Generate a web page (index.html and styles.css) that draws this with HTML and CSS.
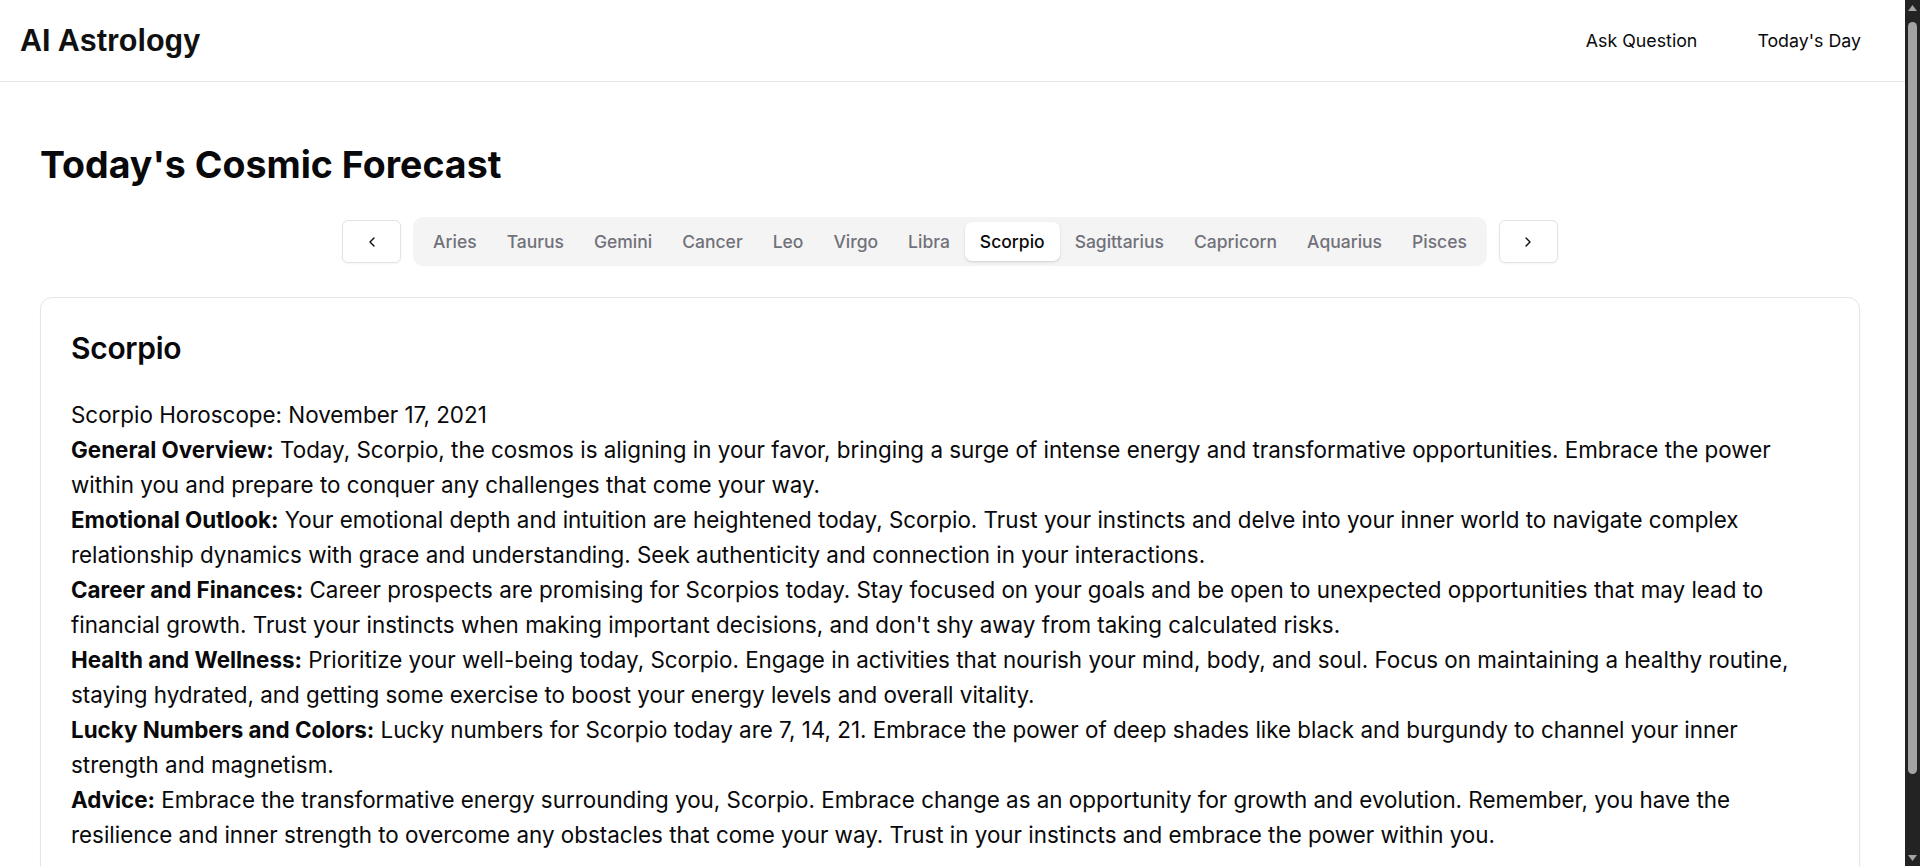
FILE: index.html
```html
<!DOCTYPE html>
<html lang="en">
<head>
<meta charset="utf-8">
<title>AI Astrology</title>
<link rel="stylesheet" href="styles.css">
</head>
<body>
<div class="app">
<header class="topbar">
  <a class="brand" href="#">AI Astrology</a>
  <nav class="nav">
    <a href="#">Ask Question</a>
    <a href="#">Today's Day</a>
  </nav>
</header>
<main class="page">
  <h1 class="page-title">Today's Cosmic Forecast</h1>
  <div class="sign-picker">
    <button class="arrow-btn" aria-label="Previous">
      <svg width="16" height="16" viewBox="0 0 24 24" fill="none" stroke="currentColor" stroke-width="2" stroke-linecap="round" stroke-linejoin="round"><path d="m15 18-6-6 6-6"/></svg>
    </button>
    <div class="tabs">
      <span class="tab">Aries</span>
      <span class="tab">Taurus</span>
      <span class="tab">Gemini</span>
      <span class="tab">Cancer</span>
      <span class="tab">Leo</span>
      <span class="tab">Virgo</span>
      <span class="tab">Libra</span>
      <span class="tab active">Scorpio</span>
      <span class="tab">Sagittarius</span>
      <span class="tab">Capricorn</span>
      <span class="tab">Aquarius</span>
      <span class="tab">Pisces</span>
    </div>
    <button class="arrow-btn" aria-label="Next">
      <svg width="16" height="16" viewBox="0 0 24 24" fill="none" stroke="currentColor" stroke-width="2" stroke-linecap="round" stroke-linejoin="round"><path d="m9 18 6-6-6-6"/></svg>
    </button>
  </div>
  <section class="card">
    <h2 class="card-title">Scorpio</h2>
    <div class="reading">
      <p>Scorpio Horoscope: November 17, 2021</p>
      <p><strong>General Overview:</strong> Today, Scorpio, the cosmos is aligning in your favor, bringing a surge of intense energy and transformative opportunities. Embrace the power within you and prepare to conquer any challenges that come your way.</p>
      <p><strong>Emotional Outlook:</strong> Your emotional depth and intuition are heightened today, Scorpio. Trust your instincts and delve into your inner world to navigate complex relationship dynamics with grace and understanding. Seek authenticity and connection in your interactions.</p>
      <p><strong>Career and Finances:</strong> Career prospects are promising for Scorpios today. Stay focused on your goals and be open to unexpected opportunities that may lead to financial growth. Trust your instincts when making important decisions, and don't shy away from taking calculated risks.</p>
      <p><strong>Health and Wellness:</strong> Prioritize your well-being today, Scorpio. Engage in activities that nourish your mind, body, and soul. Focus on maintaining a healthy routine, staying hydrated, and getting some exercise to boost your energy levels and overall vitality.</p>
      <p><strong>Lucky Numbers and Colors:</strong> Lucky numbers for Scorpio today are 7, 14, 21. Embrace the power of deep shades like black and burgundy to channel your inner strength and magnetism.</p>
      <p><strong>Advice:</strong> Embrace the transformative energy surrounding you, Scorpio. Embrace change as an opportunity for growth and evolution. Remember, you have the resilience and inner strength to overcome any obstacles that come your way. Trust in your instincts and embrace the power within you.</p>
    </div>
  </section>
</main>
</div>
<div class="scrollbar" aria-hidden="true">
  <svg class="sb-arrow" width="9" height="6" viewBox="0 0 9 6"><path d="M4.5 0 9 6H0z" fill="#a3a3a3"/></svg>
  <div class="sb-thumb"></div>
  <div class="sb-fill"></div>
  <svg class="sb-arrow" width="9" height="6" viewBox="0 0 9 6"><path d="M0 0h9L4.5 6z" fill="#a3a3a3"/></svg>
</div>
</body>
</html>
```

FILE: styles.css
```css
* { box-sizing: border-box; }

html, body {
  margin: 0;
  padding: 0;
  background: #ffffff;
  color: #09090b;
  font-family: Inter, "Noto Sans", sans-serif;
}

body {
  display: flex;
  height: 100vh;
  overflow: hidden;
}

.app {
  flex: 1;
  min-width: 0;
  height: 100vh;
  overflow-y: auto;
  background: #ffffff;
  color: #09090b;
}

.scrollbar {
  flex: none;
  width: 15px;
  height: 100vh;
  background: #232323;
  display: flex;
  flex-direction: column;
  align-items: center;
  padding: 5px 0 5px;
}

.sb-thumb {
  margin-top: 11px;
  width: 9px;
  height: 752px;
  border-radius: 5px;
  background: #a3a3a3;
}

.sb-fill { flex: 1; }

a { color: inherit; text-decoration: none; }

.topbar {
  height: 82px;
  display: flex;
  align-items: center;
  justify-content: space-between;
  padding: 0 44px 0 20px;
  border-bottom: 1px solid #e4e4e7;
}

.brand {
  font-family: "Liberation Sans", Arial, sans-serif;
  font-weight: 700;
  font-size: 30.5px;
  color: #111111;
}

.nav {
  display: flex;
  gap: 60px;
}

.nav a {
  font-size: 17.8px;
  font-weight: 400;
  color: #09090b;
}

.page {
  padding: 62px 45px 72px 40px;
}

.page-title {
  margin: 0;
  font-size: 37.5px;
  line-height: 42px;
  font-weight: 700;
}

.sign-picker {
  margin-top: 31px;
  display: flex;
  align-items: center;
  justify-content: center;
  gap: 12px;
}

.arrow-btn {
  width: 59px;
  height: 43px;
  display: flex;
  align-items: center;
  justify-content: center;
  background: #ffffff;
  border: 1px solid #e4e4e7;
  border-radius: 6px;
  box-shadow: 0 1px 2px rgba(0, 0, 0, 0.05);
  color: #09090b;
  padding: 0;
}

.tabs {
  display: flex;
  align-items: center;
  padding: 5px;
  background: #f4f4f5;
  border-radius: 10px;
}

.tab {
  height: 39px;
  display: flex;
  align-items: center;
  padding: 0 15px;
  font-size: 17.5px;
  font-weight: 500;
  color: #71717a;
  border-radius: 7px;
}

.tab.active {
  background: #ffffff;
  color: #09090b;
  box-shadow: 0 1px 3px rgba(0, 0, 0, 0.1), 0 1px 2px rgba(0, 0, 0, 0.06);
}

.card {
  margin-top: 31px;
  border: 1px solid #e4e4e7;
  border-radius: 12px;
  padding: 32px 32px 32px 30px;
  box-shadow: 0 1px 2px rgba(0, 0, 0, 0.04);
}

.card-title {
  margin: 0;
  font-size: 30px;
  line-height: 36px;
  font-weight: 600;
  letter-spacing: -0.01em;
}

.reading {
  margin-top: 31px;
  font-size: 22.4px;
  line-height: 35px;
}

.reading p { margin: 0; }

.reading strong { font-weight: 700; }
```
